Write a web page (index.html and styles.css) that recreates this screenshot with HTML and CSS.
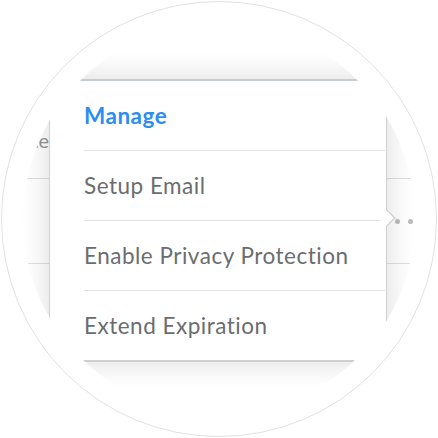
FILE: index.html
```html
<!DOCTYPE html>
<html lang="en">
  <head>
    <meta charset="UTF-8" />
    <meta name="viewport" content="width=device-width, initial-scale=1.0" />
    <title>Domain menu</title>
    <link rel="stylesheet" href="styles.css">
  </head>
  <body>
    <div class="lens">
      <div class="view">
        <div class="table">
          <div class="row">
            <div class="cell cell-left"><span class="label">Date</span></div>
            <div class="cell cell-mid"></div>
            <div class="cell cell-right"></div>
          </div>
          <div class="row">
            <div class="cell cell-left"></div>
            <div class="cell cell-mid"></div>
            <div class="cell cell-right">
              <span class="dot"></span><span class="dot"></span><span class="dot"></span>
            </div>
          </div>
          <div class="row">
            <div class="cell cell-left"></div>
            <div class="cell cell-mid"></div>
            <div class="cell cell-right"></div>
          </div>
        </div>

        <div class="menu">
          <span class="arrow"></span>
          <ul class="menu-list">
            <li class="menu-item active">Manage</li>
            <li class="menu-item">Setup Email</li>
            <li class="menu-item">Enable Privacy Protection</li>
            <li class="menu-item">Extend Expiration</li>
          </ul>
        </div>
      </div>
    </div>
  </body>
</html>
```

FILE: styles.css
```css
body {
  margin: 0;
  background-color: rgb(255, 255, 255);
  font-family: Lato, "Open Sans", sans-serif;
}

.lens {
  width: 436px;
  height: 436px;
  margin: 1px;
  box-sizing: border-box;
  border: 1.5px solid rgb(226, 226, 226);
  border-radius: 50%;
  display: flex;
  justify-content: center;
  align-items: center;
}

.view {
  position: relative;
  width: 392px;
  height: 392px;
  border-radius: 50%;
  overflow: hidden;
  background-color: rgb(255, 255, 255);
}

/* table behind the popover */
.table {
  display: flex;
  flex-direction: column;
  padding-top: 71px;
}
.row {
  display: flex;
  height: 84px;
  border-bottom: 1px solid rgb(224, 224, 224);
}
.cell-left {
  width: 26px;
  display: flex;
  justify-content: flex-end;
  align-items: center;
  padding-top: 8px;
}
.cell-mid {
  flex: 1;
}
.cell-right {
  width: 33px;
  display: flex;
  align-items: center;
  gap: 8px;
}
.label {
  white-space: nowrap;
  color: rgb(150, 150, 150);
  font-size: 20px;
}
.dot {
  flex: none;
  width: 5px;
  height: 5px;
  border-radius: 50%;
  background-color: rgb(188, 188, 188);
}

/* popover menu */
.menu {
  position: absolute;
  left: 26px;
  top: 56px;
  width: 338px;
  box-sizing: border-box;
  background-color: rgb(255, 255, 255);
  border: 1px solid rgb(208, 208, 208);
  border-top: 2px solid rgb(200, 204, 209);
  border-bottom: 2px solid rgb(205, 208, 211);
  box-shadow: 0 0 24px 5px rgba(0, 0, 0, 0.11);
}
.arrow {
  position: absolute;
  right: -7px;
  top: 131px;
  width: 11px;
  height: 11px;
  background-color: rgb(255, 255, 255);
  border-top: 1px solid rgb(200, 200, 200);
  border-right: 1px solid rgb(200, 200, 200);
  transform: rotate(45deg);
}
.menu-list {
  list-style: none;
  margin: 0;
  padding: 0 1px 0 34px;
}
.menu-item {
  height: 69px;
  line-height: 69px;
  padding-left: 0;
  font-size: 22.5px;
  letter-spacing: 0.5px;
  color: rgb(106, 109, 112);
  border-bottom: 1px solid rgb(228, 228, 228);
}
.menu-item:last-child {
  border-bottom: none;
}
.menu-item.active {
  color: rgb(43, 142, 240);
  font-weight: 700;
}
```
